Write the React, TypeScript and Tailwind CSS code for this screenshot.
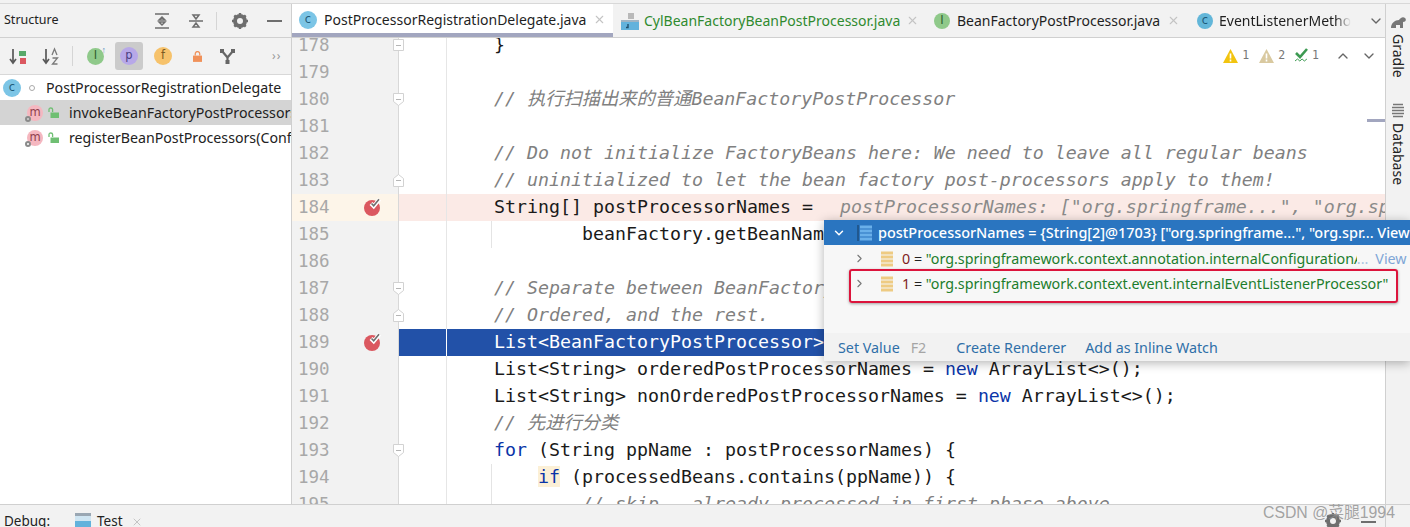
import type { ReactNode } from 'react';
import { ChevronDown, ChevronRight, ChevronUp, X } from 'lucide-react';

const ui = 'font-["Noto_Sans","Liberation_Sans",sans-serif]';

type Fold = 'end' | 'start' | 'box';

interface Line {
  no: number;
  code?: ReactNode;
  fold?: Fold;
  bp?: boolean;
  tint?: 'pink' | 'blue';
  guide?: boolean;
}

const Cm = ({ children }: { children: ReactNode }) => <span className="text-[#808080] italic">{children}</span>;
const Kw = ({ children }: { children: ReactNode }) => <span className="text-[#0b35a8]">{children}</span>;

const lines: Line[] = [
  { no: 178, code: '}', fold: 'box' },
  { no: 179 },
  { no: 180, code: <Cm>// 执行扫描出来的普通BeanFactoryPostProcessor</Cm>, fold: 'start' },
  { no: 181 },
  { no: 182, code: <Cm>// Do not initialize FactoryBeans here: We need to leave all regular beans</Cm> },
  { no: 183, code: <Cm>// uninitialized to let the bean factory post-processors apply to them!</Cm>, fold: 'end' },
  {
    no: 184,
    bp: true,
    tint: 'pink',
    code: (
      <>
        String[] postProcessorNames = <span className="ml-[16px] text-[#8a8a8a] italic">postProcessorNames: ["org.springframe...", "org.spring</span>
      </>
    ),
  },
  { no: 185, guide: true, code: <span className="ml-[88px]">beanFactory.getBeanNamesForType</span> },
  { no: 186 },
  { no: 187, code: <Cm>// Separate between BeanFactoryPostProcessors that implement PriorityOrdered,</Cm>, fold: 'start' },
  { no: 188, code: <Cm>// Ordered, and the rest.</Cm>, fold: 'end' },
  { no: 189, bp: true, tint: 'blue', code: 'List<BeanFactoryPostProcessor> priorityOrderedPostProcessors' },
  { no: 190, code: <>List&lt;String&gt; orderedPostProcessorNames = <Kw>new</Kw> ArrayList&lt;&gt;();</> },
  { no: 191, code: <>List&lt;String&gt; nonOrderedPostProcessorNames = <Kw>new</Kw> ArrayList&lt;&gt;();</> },
  { no: 192, code: <Cm>// 先进行分类</Cm> },
  { no: 193, code: <><Kw>for</Kw> (String ppName : postProcessorNames) {'{'}</>, fold: 'start' },
  {
    no: 194,
    guide: true,
    code: <span className="ml-[44px]"><span className="bg-[#fcf0d6] text-[#0b35a8]">if</span> (processedBeans.contains(ppName)) {'{'}</span>,
  },
  { no: 195, guide: true, code: <span className="ml-[88px]"><Cm>// skip - already processed in first phase above</Cm></span> },
];

const FoldMark = ({ kind }: { kind: Fold }) => (
  <svg width="11" height="15" viewBox="0 0 11 15" className="absolute left-[-6px] top-[6px]">
    {kind === 'start' && <path d="M.5 1.5h10v8l-5 4-5-4z" fill="#fff" stroke="#d2d2d2" />}
    {kind === 'end' && <path d="M.5 13.5h10v-8l-5-4-5 4z" fill="#fff" stroke="#d2d2d2" />}
    {kind === 'box' && <path d="M.5 1.5h10v11H.5z" fill="#fff" stroke="#d2d2d2" />}
    <path d="M3 7.5h5" stroke="#b5b5b5" />
  </svg>
);

const Breakpoint = () => (
  <svg width="20" height="20" viewBox="0 0 20 20" className="absolute left-[-36px] top-[3px]">
    <circle cx="9" cy="11" r="8" fill="#db5860" />
    <path d="M8 6.5l2.7 2.7 5.8-7" fill="none" stroke="#fff" strokeWidth="4" />
    <path d="M8.5 6.5l2.2 2.2 5.3-6.4" fill="none" stroke="#6e6e6e" strokeWidth="1.6" />
  </svg>
);

const CodeRow = ({ line }: { line: Line }) => {
  const gutterBg = line.tint === 'pink' ? 'bg-[#fdf5e9]' : 'bg-[#f2f2f2]';
  const bodyBg = line.tint === 'pink' ? 'bg-[#fbeae6]' : line.tint === 'blue' ? 'bg-[#2251a8] text-white' : '';
  return (
    <div className="flex h-[27px] shrink-0">
      <div className={`w-[106px] shrink-0 pl-[6px] text-[17.5px] leading-[27px] text-[#a8a8a8] ${gutterBg}`}>{line.no}</div>
      <div className={`relative flex min-w-0 flex-1 border-l border-[#d8d8d8] ${bodyBg}`}>
        {line.bp && <Breakpoint />}
        {line.fold && <FoldMark kind={line.fold} />}
        <div className={`h-full w-[48px] shrink-0 border-r ${line.tint === 'blue' ? 'border-white' : 'border-[#e6e6e6]'}`} />
        <div className={`whitespace-pre pl-[47px] leading-[25px] ${line.guide ? 'relative' : ''}`}>
          {line.guide && <div className="absolute left-[44px] top-0 h-[27px] w-px bg-[#e4e4e4]" />}
          {line.code}
        </div>
      </div>
    </div>
  );
};

const Round = ({ bg, fg, label, size = 16 }: { bg: string; fg: string; label: string; size?: number }) => (
  <span
    className="flex shrink-0 items-center justify-center rounded-full font-['DejaVu_Sans',sans-serif] text-[11.5px]"
    style={{ background: bg, color: fg, width: size, height: size }}
  >
    {label}
  </span>
);

const StackIcon = () => (
  <svg width="16" height="16" viewBox="0 0 16 16" className="shrink-0">
    <path d="M2 2h12M2 6h12M2 10h12M2 14h12" stroke="#eecb83" strokeWidth="3" />
  </svg>
);

const JavaFile = () => (
  <svg width="19" height="18" viewBox="0 0 19 18" className="shrink-0">
    <path d="M8 1h6v6H8z" fill="#b9b9b9" />
    <path d="M1 8h18v2H1z" fill="#9fb4c4" />
    <path d="M1 10h18v8H1z" fill="#62b2dc" />
    <path d="M8 12v3.5H6" fill="none" stroke="#1f4f6e" strokeWidth="1.4" />
  </svg>
);

const LockIcon = ({ color = '#6fbf73' }: { color?: string }) => (
  <svg width="12" height="12" viewBox="0 0 12 12" className="shrink-0">
    <path d="M2.5 5.5h8.5V11H2.5z" fill={color} />
    <path d="M1 5V2.5Q1 1 2.8 1T4.6 2.5V5" fill="none" stroke={color} strokeWidth="1.3" />
  </svg>
);

const MethodIcon = () => (
  <span className="relative flex shrink-0">
    <Round bg="#f5b7c0" fg="#8f3f4e" label="m" />
    <span className="absolute bottom-[-1px] left-[-2px] size-[6px] rounded-full border-2 border-[#8a8a8a]" />
  </span>
);

const Warn = ({ fill, n }: { fill: string; n: string }) => (
  <span className="flex items-center gap-[4px] font-['DejaVu_Sans_Mono',monospace] text-[11.5px] text-[#777]">
    <svg width="15" height="14" viewBox="0 0 15 14">
      <path d="M7.5 0L15 14H0z" fill={fill} />
      <path d="M7.5 4.5v5M7.5 10.5v2" stroke="#fff" strokeWidth="1.6" />
    </svg>
    {n}
  </span>
);

const Rail = ({ icon, label, height }: { icon: ReactNode; label: string; height: string }) => (
  <div className={`flex flex-col items-center ${height}`}>
    {icon}
    <span className="mt-[5px] whitespace-nowrap text-[14px] leading-none text-[#222] [writing-mode:vertical-rl]">{label}</span>
  </div>
);

const Gear = () => (
  <>
    <circle cx="9" cy="9" r="5" fill="none" stroke="#6e6e6e" strokeWidth="4" />
    <path d="M9 1v3M9 14v3M1 9h3M14 9h3M3.3 3.3l2 2M12.7 12.7l2 2M3.3 14.7l2-2M12.7 5.3l2-2" stroke="#6e6e6e" strokeWidth="2.4" />
  </>
);

const Structure = () => (
  <div className="flex w-[292px] shrink-0 flex-col border-r border-[#cfcfcf] bg-white">
    <div className="flex h-[34px] shrink-0 items-center border-b border-[#d0d0d0] bg-[#f2f2f2] pl-[4px] text-[12.5px] text-[#222]">
      <span className="w-[149px]">Structure</span>
      <svg width="18" height="18" viewBox="0 0 18 18" fill="none" stroke="#6e6e6e" strokeWidth="1.5">
        <path d="M2 2h14M2 16h14M9 5l-3 3h6zM9 13l-3-3h6z" />
      </svg>
      <svg width="18" height="18" viewBox="0 0 18 18" fill="none" stroke="#6e6e6e" strokeWidth="1.5" className="ml-[16px]">
        <path d="M2 9h14M9 7L6 3h6zM9 11l-3 4h6z" />
      </svg>
      <div className="ml-[11px] h-[18px] w-px bg-[#d5d5d5]" />
      <svg width="18" height="18" viewBox="0 0 18 18" className="ml-[14px]">
        <Gear />
      </svg>
      <div className="ml-[18px] h-[2px] w-[15px] bg-[#6e6e6e]" />
    </div>
    <div className="flex h-[37px] shrink-0 items-center border-b border-[#d8d8d8] bg-[#f2f2f2] pl-[9px]">
      <svg width="18" height="20" viewBox="0 0 18 20" fill="none" className="shrink-0">
        <path d="M4 3v14M1 13l3 4 3-4" stroke="#5a5a5a" strokeWidth="1.7" />
        <path d="M10 5h7v5h-7z" fill="#59a869" />
        <path d="M11 12h6v6h-6z" fill="#db5860" />
      </svg>
      <svg width="18" height="20" viewBox="0 0 18 20" fill="none" className="ml-[15px] shrink-0">
        <path d="M4 3v14M1 13l3 4 3-4" stroke="#5a5a5a" strokeWidth="1.7" />
        <path d="M10 9l2.5-6 2.5 6M10.5 12h5l-5 6h5" stroke="#7a7a7a" strokeWidth="1.3" />
      </svg>
      <div className="ml-[12px] h-[20px] w-px bg-[#d5d5d5]" />
      <span className="relative ml-[14px] flex">
        <Round bg="#8fc98a" fg="#2f5f2f" label="I" size={17} />
        <span className="absolute right-[-2px] top-[-3px] text-[9px] leading-none text-[#5d93c4]">↑</span>
      </span>
      <span className="ml-[11px] flex size-[28px] items-center justify-center rounded-[3px] bg-[#cbcbcb]">
        <Round bg="#b7a8e8" fg="#4b3f80" label="p" size={18} />
      </span>
      <span className="ml-[11px]"><Round bg="#f6c26b" fg="#7a5a22" label="f" size={18} /></span>
      <svg width="9" height="11" viewBox="0 0 10 12" className="ml-[21px] shrink-0">
        <path d="M0 5h10v7H0z" fill="#f0915a" />
        <path d="M2.5 5V3a2.5 2.5 0 015 0v2" fill="none" stroke="#f0915a" strokeWidth="1.4" />
      </svg>
      <svg width="15" height="15" viewBox="0 0 15 15" fill="none" className="ml-[18px] shrink-0">
        <path d="M2 2l5.5 6.5L13 2M7.5 8v5" stroke="#666" strokeWidth="2.2" />
        <path d="M0 0h4v4H0zM11 0h4v4h-4zM5.5 11h4v4h-4z" fill="#666" />
      </svg>
      <span className="ml-[37px] text-[12px] tracking-[1px] text-[#999]">››</span>
    </div>
    <div className="flex h-[25px] items-center overflow-hidden pl-[3px] text-[14.2px] text-[#222]">
      <Round bg="#7cc5e6" fg="#215c7a" label="c" size={18} />
      <span className="ml-[8px] size-[6px] shrink-0 rounded-full border border-[#aaa]" />
      <span className="ml-[11px] whitespace-nowrap">PostProcessorRegistrationDelegate</span>
    </div>
    <div className="flex h-[25px] items-center overflow-hidden bg-[#d4d4d4] pl-[27px] text-[14.2px] text-[#222]">
      <MethodIcon />
      <span className="ml-[5px]"><LockIcon /></span>
      <span className="ml-[9px] whitespace-nowrap">invokeBeanFactoryPostProcessors(</span>
    </div>
    <div className="flex h-[25px] items-center overflow-hidden pl-[27px] text-[14.2px] text-[#222]">
      <MethodIcon />
      <span className="ml-[5px]"><LockIcon /></span>
      <span className="ml-[9px] whitespace-nowrap">registerBeanPostProcessors(Config</span>
    </div>
  </div>
);

const Tabs = () => (
  <div className="relative z-10 flex h-[34px] shrink-0 items-center border-b border-[#d0d0d0] bg-[#f2f2f2] text-[14px] text-[#1f1f1f]">
    <div className="flex h-full w-[321px] shrink-0 items-center border-b-[4px] border-[#a2a6bf] bg-white pl-[7px] pt-[2px]">
      <Round bg="#7cc5e6" fg="#215c7a" label="c" size={18} />
      <span className="ml-[7px] whitespace-nowrap">PostProcessorRegistrationDelegate.java</span>
      <X size={13} className="ml-[7px] text-[#c4c4c4]" />
    </div>
    <div className="flex h-full w-[321px] shrink-0 items-center pl-[7px]">
      <JavaFile />
      <span className="ml-[5px] whitespace-nowrap text-[#2f8a2f]">CylBeanFactoryBeanPostProcessor.java</span>
      <X size={13} className="ml-[6px] text-[#c4c4c4]" />
    </div>
    <div className="flex h-full w-[263px] shrink-0 items-center">
      <Round bg="#8fc98a" fg="#2f5f2f" label="I" />
      <span className="ml-[7px] whitespace-nowrap">BeanFactoryPostProcessor.java</span>
      <X size={13} className="ml-[7px] text-[#c4c4c4]" />
    </div>
    <div className="flex h-full min-w-0 flex-1 items-center">
      <Round bg="#62b6d9" fg="#1d5a78" label="c" />
      <span className="ml-[6px] w-[132px] overflow-hidden whitespace-nowrap [mask-image:linear-gradient(to_right,black_88%,transparent)]">EventListenerMethodProcessor</span>
      <ChevronDown size={16} className="ml-[17px] text-[#666]" />
    </div>
  </div>
);

const InspectPopup = () => (
  <div className={`absolute left-[532px] top-[216px] z-20 flex h-[141px] w-[586px] flex-col overflow-hidden bg-[#f7f7f7] shadow-[0_2px_10px_rgba(0,0,0,0.3)] ${ui} text-[14.3px]`}>
    <div className="flex h-[25px] shrink-0 items-center whitespace-nowrap bg-[#2a75c0] pl-[8px] text-[14.45px] font-medium text-white">
      <ChevronDown size={14} strokeWidth={2.5} />
      <svg width="16" height="16" viewBox="0 0 16 16" className="ml-[11px] shrink-0">
        <path d="M3 2h12M3 6h12M3 10h12M3 14h12" stroke="#6ab0ea" strokeWidth="3" />
        <path d="M1 0v16" stroke="#1f4f7f" strokeWidth="1.5" />
      </svg>
      <span className="ml-[5px]">postProcessorNames = {'{String[2]@1703}'} ["org.springframe...", "org.spr... View</span>
    </div>
    <div className="mt-[1px] flex h-[25px] shrink-0 items-center whitespace-nowrap pl-[29px]">
      <ChevronRight size={13} className="text-[#777]" />
      <span className="ml-[13px]"><StackIcon /></span>
      <span className="ml-[7px] text-[#7f1d1d]">0</span>
      <span className="text-[#222]">&nbsp;=&nbsp;</span>
      <span className="w-[431px] shrink-0 overflow-hidden text-[#1c7d2c]">"org.springframework.context.annotation.internalConfigurationAnnotationProcessor"</span>
      <span className="text-[#a9c4e0]">...</span>
      <span className="ml-[7px] text-[#7fa6d6]">View</span>
    </div>
    <div className="relative flex h-[25px] shrink-0 items-center whitespace-nowrap pl-[29px]">
      <ChevronRight size={13} className="text-[#777]" />
      <span className="ml-[13px]"><StackIcon /></span>
      <span className="ml-[7px] text-[#7f1d1d]">1</span>
      <span className="text-[#222]">&nbsp;=&nbsp;</span>
      <span className="text-[#1c7d2c]">"org.springframework.context.event.internalEventListenerProcessor"</span>
      <div className="absolute left-[25px] top-[-2px] h-[34px] w-[549px] rounded-[3px] border-[2px] border-[#dc143c] shadow-[0_1px_3px_rgba(0,0,0,0.35)]" />
    </div>
    <div className="mt-auto flex h-[28px] shrink-0 items-center whitespace-nowrap bg-[#f2f2f2] pl-[14px] pt-[1px] text-[#2f6fa8]">
      Set Value
      <span className="ml-[11px] text-[#a5a5a5]">F2</span>
      <span className="ml-[30px]">Create Renderer</span>
      <span className="ml-[19px]">Add as Inline Watch</span>
    </div>
  </div>
);

const Editor = () => (
  <div className="relative flex min-w-0 flex-1 flex-col">
    <Tabs />
    <div className={`absolute right-[8px] top-[43px] z-10 flex items-center gap-[10px] ${ui}`}>
      <Warn fill="#f2c40f" n="1" />
      <Warn fill="#d9c9a0" n="2" />
      <span className="flex items-center gap-[3px] font-['DejaVu_Sans_Mono',monospace] text-[11.5px] text-[#777]">
        <svg width="14" height="15" viewBox="0 0 14 15" fill="none">
          <path d="M1 5l4 4 7-8" stroke="#3d9a52" strokeWidth="2.6" />
          <path d="M0 13l2.5-2 2.3 2 2.3-2 2.3 2 2.5-2" stroke="#3d9a52" />
        </svg>
        1
      </span>
      <ChevronUp size={16} className="ml-[6px] text-[#666]" />
      <ChevronDown size={16} className="text-[#666]" />
    </div>
    <div className="absolute right-0 top-[115px] h-[3px] w-[18px] bg-[#a2a6bf]" />
    <div className="mt-[-6px] flex min-h-0 flex-1 flex-col overflow-hidden font-['DejaVu_Sans_Mono','Noto_Sans_CJK_SC',monospace] text-[18.27px] leading-[27px] text-[#1a1a1a]">
      {lines.map((line) => (
        <CodeRow key={line.no} line={line} />
      ))}
    </div>
    <InspectPopup />
  </div>
);

export default function App() {
  return (
    <div className={`relative flex h-[527px] w-[1410px] flex-col overflow-hidden border-t-[3px] border-[#f2f2f2] bg-white ${ui}`}>
      <div className="h-px shrink-0 bg-[#d8d8d8]" />
      <div className="flex min-h-0 flex-1">
        <Structure />
        <Editor />
        <div className="flex w-[25px] shrink-0 flex-col items-center border-l border-[#d0d0d0] bg-[#f2f2f2] pt-[12px]">
          <Rail
            height="h-[87px]"
            label="Gradle"
            icon={
              <svg width="16" height="13" viewBox="0 0 16 13">
                <path d="M1 12C1 7 5 4 9 4c1-2 4-4 6-2s0 4-2 4v6h-3V9H6v3H3z" fill="#777" />
              </svg>
            }
          />
          <Rail
            height="h-[90px]"
            label="Database"
            icon={
              <svg width="14" height="15" viewBox="0 0 14 15" fill="none" stroke="#777" strokeWidth="1.7">
                <path d="M2 1.5h10M1 4.5h12M1 7.5h12M1 10.5h12M2 13.5h10" />
              </svg>
            }
          />
        </div>
      </div>
      <div className="relative flex h-[23px] shrink-0 items-start border-t border-[#d0d0d0] bg-[#f2f2f2] pl-[4px] pt-[7px] text-[13.5px] leading-[18px] text-[#222]">
        <span className="w-[71px]">Debug:</span>
        <svg width="16" height="16" viewBox="0 0 16 16" className="mt-[1px] shrink-0">
          <path d="M0 0h16v3H0z" fill="#9aa7b3" />
          <path d="M0 3h16v13H0z" fill="#cfe5f2" />
          <path d="M0 8h16v8H0z" fill="#62b2dc" />
        </svg>
        <span className="ml-[6px]">Test</span>
        <X size={12} className="ml-[8px] mt-[4px] text-[#c4c4c4]" />
        <svg width="18" height="18" viewBox="0 0 18 18" className="absolute left-[1324px] top-[7px]">
          <Gear />
        </svg>
        <div className="absolute left-[1361px] top-[16px] h-[2px] w-[15px] bg-[#6e6e6e]" />
        <div className="absolute left-[1385px] top-0 h-full w-px bg-[#d0d0d0]" />
      </div>
      <div className="absolute left-[1263px] top-[498px] z-30 whitespace-nowrap font-['Liberation_Sans','Noto_Sans_CJK_SC',sans-serif] text-[15.8px] text-[#8d8d8d]/80">
        CSDN @菜腿1994
      </div>
    </div>
  );
}
